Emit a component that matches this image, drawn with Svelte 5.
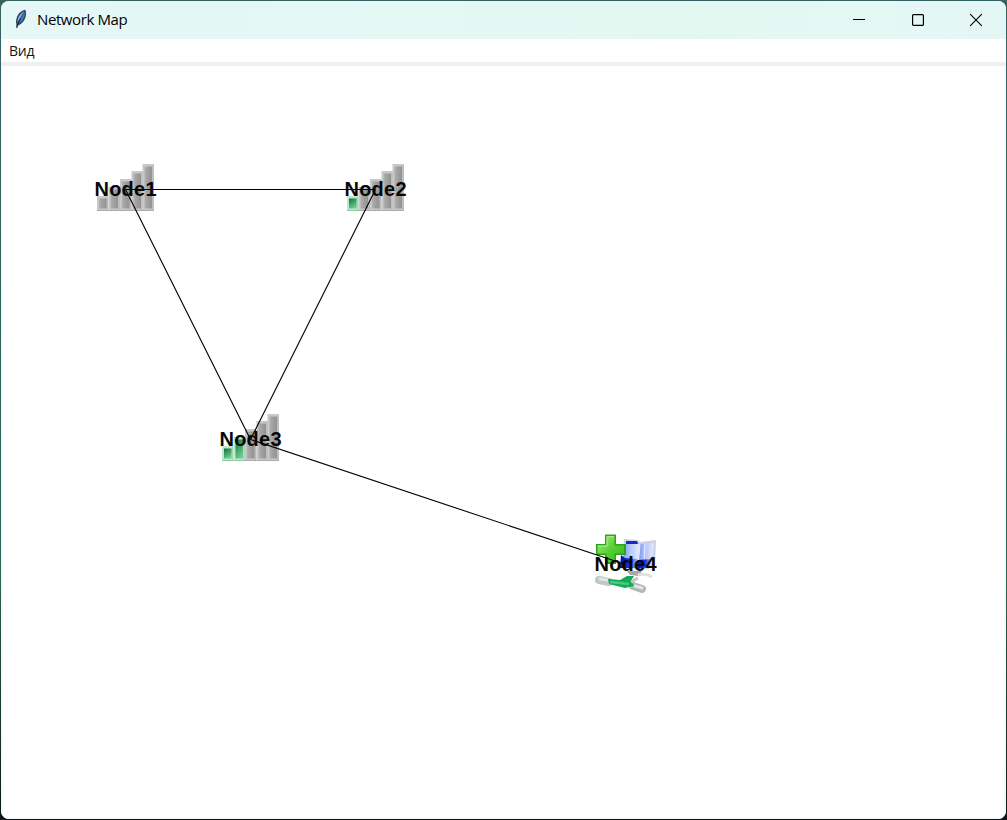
<script>
  const nodes = [
    { name: 'Node1', x: 125, y: 189, level: 0 },
    { name: 'Node2', x: 375, y: 189, level: 1 },
    { name: 'Node3', x: 250, y: 439, level: 2 },
    { name: 'Node4', x: 625, y: 564, level: null }
  ];
  const links = [[0, 1], [0, 2], [1, 2], [2, 3]];
  const bars = [
    { x: -28, top: 7 },
    { x: -16.5, top: -2 },
    { x: -5, top: -10 },
    { x: 6.5, top: -18 },
    { x: 17.5, top: -25 }
  ];
</script>

<div class="desktop">
  <div class="window">
    <header>
      <svg class="feather" width="14" height="20" viewBox="0 0 14 20">
        <path d="M11.3 .8C7.5 1.5 4 4.5 2.8 8.5C1.9 11 1.9 13 2.3 15L2.6 19L4.2 16.6C8 15 10.7 11.5 11.7 7.5C12.3 5 12.2 2.5 11.3 .8Z" fill="#34435a" />
        <path d="M10.6 2C7.5 3.5 4.7 6.5 3.7 10L3.5 14C6 9 8 6 10.6 2Z" fill="#77aee6" />
        <path d="M11 2.8C8.7 6 6.3 10 5 14.5C8.5 12.5 11 8 11 2.8Z" fill="#3f78c6" />
        <path d="M6.5 9.5C5 12 3.5 15 2.7 19" fill="none" stroke="#192536" stroke-width="1" />
      </svg>
      <h1>Network Map</h1>
      <div class="controls">
        <svg width="14" height="14" viewBox="0 0 14 14"><path d="M1 6.5H13" stroke="#000" /></svg>
        <svg width="14" height="14" viewBox="0 0 14 14"><rect x="1.6" y="1.6" width="10.8" height="10.8" rx="1" fill="none" stroke="#000" stroke-width="1.2" /></svg>
        <svg width="14" height="14" viewBox="0 0 14 14"><path d="M1.2 1.2L12.8 12.8M12.8 1.2L1.2 12.8" stroke="#000" stroke-width="1.1" /></svg>
      </div>
    </header>
    <nav><span>Вид</span></nav>
    <main>
      <svg class="map" width="1005" height="753" viewBox="1 66 1005 753">
        <defs>
          <linearGradient id="gray"><stop offset="0" stop-color="#b0b0b0" /><stop offset=".5" stop-color="#9e9e9e" /><stop offset="1" stop-color="#929292" /></linearGradient>
          <linearGradient id="green" x2=".5" y2="1"><stop offset="0" stop-color="#087637" /><stop offset="1" stop-color="#72c891" /></linearGradient>
          <linearGradient id="screen"><stop offset="0" stop-color="#7896ee" /><stop offset=".5" stop-color="#b7c8fa" /><stop offset="1" stop-color="#e2ebff" /></linearGradient>
          <linearGradient id="blue"><stop offset="0" stop-color="#0010a8" /><stop offset=".5" stop-color="#1730dc" /><stop offset="1" stop-color="#a9bdfb" /></linearGradient>
          <linearGradient id="plus" x2="1" y2="1"><stop offset="0" stop-color="#b2f07b" /><stop offset=".5" stop-color="#58cf37" /><stop offset="1" stop-color="#2eb91d" /></linearGradient>
        </defs>
        {#each nodes as node}
          <g transform="translate({node.x} {node.y})">
            {#if node.level !== null}
              {#each bars as bar, i}
                <rect x={bar.x} y={bar.top} width="11.3" height={22 - bar.top} fill={i < node.level ? '#bfe7cc' : '#c8c8c8'} />
                <rect x={bar.x + 2} y={bar.top + 2.5} width="7.6" height={17 - bar.top} fill={i < node.level ? 'url(#green)' : 'url(#gray)'} />
                <path d="M{bar.x} 21.5h11.3" stroke={i < node.level ? '#8fc5a0' : '#aaaaaa'} />
                <path d="M{bar.x + 10.7} {bar.top + 1}V21" stroke={i < node.level ? '#9ad2ad' : '#b5b5b5'} />
              {/each}
            {:else}
              <path d="M-1-25L13-24L15-22L31-24L30 1L24 5L-3 4Z" fill="#cdd3e4" />
              <path d="M1-23H12L13-20H1Z" fill="#1729c7" />
              <path d="M1-20L14-20L13 0L-3-1Z" fill="url(#screen)" />
              <path d="M15-20L29-21L27 0L13 1Z" fill="url(#screen)" />
              <path d="M15-20L13 2M20-20L19-5" stroke="#eef2ff" />
              <path d="M-4-9L0-6L13-5L12 4H-5Z" fill="url(#blue)" />
              <path d="M13-4L27-5L24 3L13 5Z" fill="url(#blue)" />
              <path d="M2 7H17L14 12L5 11Z" fill="#a7a7a7" />
              <path d="M13 11Q20 9 27 13" fill="none" stroke="#e0e0e0" stroke-width="3" />
              <path d="M-26 16L-16 18" fill="none" stroke="#bdc9c5" stroke-width="8" stroke-linecap="round" />
              <path d="M8 22L17 25" fill="none" stroke="#aebab6" stroke-width="8" stroke-linecap="round" />
              <path d="M-25 15L-18 16M10 22L17 24" fill="none" stroke="#dfe6e3" stroke-width="3" stroke-linecap="round" />
              <path d="M-17 15L-5 16L2 12L9 12L6 17L9 22L0 24L-16 20Z" fill="#15a957" />
              <path d="M-15 18L4 20" stroke="#45cb80" stroke-width="2.5" />
              <path d="M6 18L13 14" stroke="#c3c3c3" stroke-width="3" />
              <path d="M-20-29.5H-9V-20H1V-9H-9V0H-20V-9H-29V-20H-20Z" fill="#2da320" />
              <path d="M-18.5-28H-10.5V-18.5H-1V-10.5H-10.5V-2H-18.5V-10.5H-27.5V-18.5H-18.5Z" fill="url(#plus)" />
              <path d="M-18-27.5H-11M-27-18H-18V-27" fill="none" stroke="#b1eb89" />
            {/if}
          </g>
        {/each}
        {#each links as [a, b]}
          <line x1={nodes[a].x + 0.5} y1={nodes[a].y + 0.5} x2={nodes[b].x + 0.5} y2={nodes[b].y + 0.5} />
        {/each}
        {#each nodes as node}
          <text x={node.x - 30.5} y={node.y + 7} textLength="62">{node.name}</text>
        {/each}
      </svg>
    </main>
  </div>
</div>

<style>
  .desktop {
    box-sizing: border-box;
    width: 1007px;
    height: 820px;
    padding: 1px;
    background: linear-gradient(#346462, #2c6259 70%, #0b1815);
    overflow: hidden;
  }
  .window {
    display: flex;
    flex-direction: column;
    width: 1005px;
    height: 818px;
    border-radius: 8px;
    overflow: hidden;
    background: #fff;
  }
  header {
    box-sizing: border-box;
    display: flex;
    align-items: center;
    flex: 0 0 38px;
    padding: 0 15px 0 13px;
    background: linear-gradient(90deg, #e5f7f6, #e4f8f2 70%, #e5f7f5);
  }
  .feather { margin: -2px 9px 0 0; }
  h1 {
    margin: -2px 0 0;
    font: 400 15px/20px "Open Sans", "Noto Sans", sans-serif;
    letter-spacing: -0.4px;
    color: #000;
  }
  .controls { display: flex; gap: 44.5px; margin-left: auto; padding-right: 8px; }
  nav {
    display: flex;
    align-items: center;
    flex: 0 0 23px;
    padding-left: 8px;
    font: 14px/20px "Open Sans", "Noto Sans", sans-serif;
    letter-spacing: -0.2px;
    color: #151515;
  }
  main {
    box-sizing: border-box;
    flex: 1;
    border-top: 4px solid #f0f0f0;
    box-shadow: inset 2px 0 #f8f8f8, inset -2px -2px #f8f8f8;
  }
  .map { display: block; }
  line { stroke: #000; stroke-width: 1.1; }
  text {
    font: bold 20px "Liberation Sans", Arial, sans-serif;
    fill: #070707;
  }
</style>
